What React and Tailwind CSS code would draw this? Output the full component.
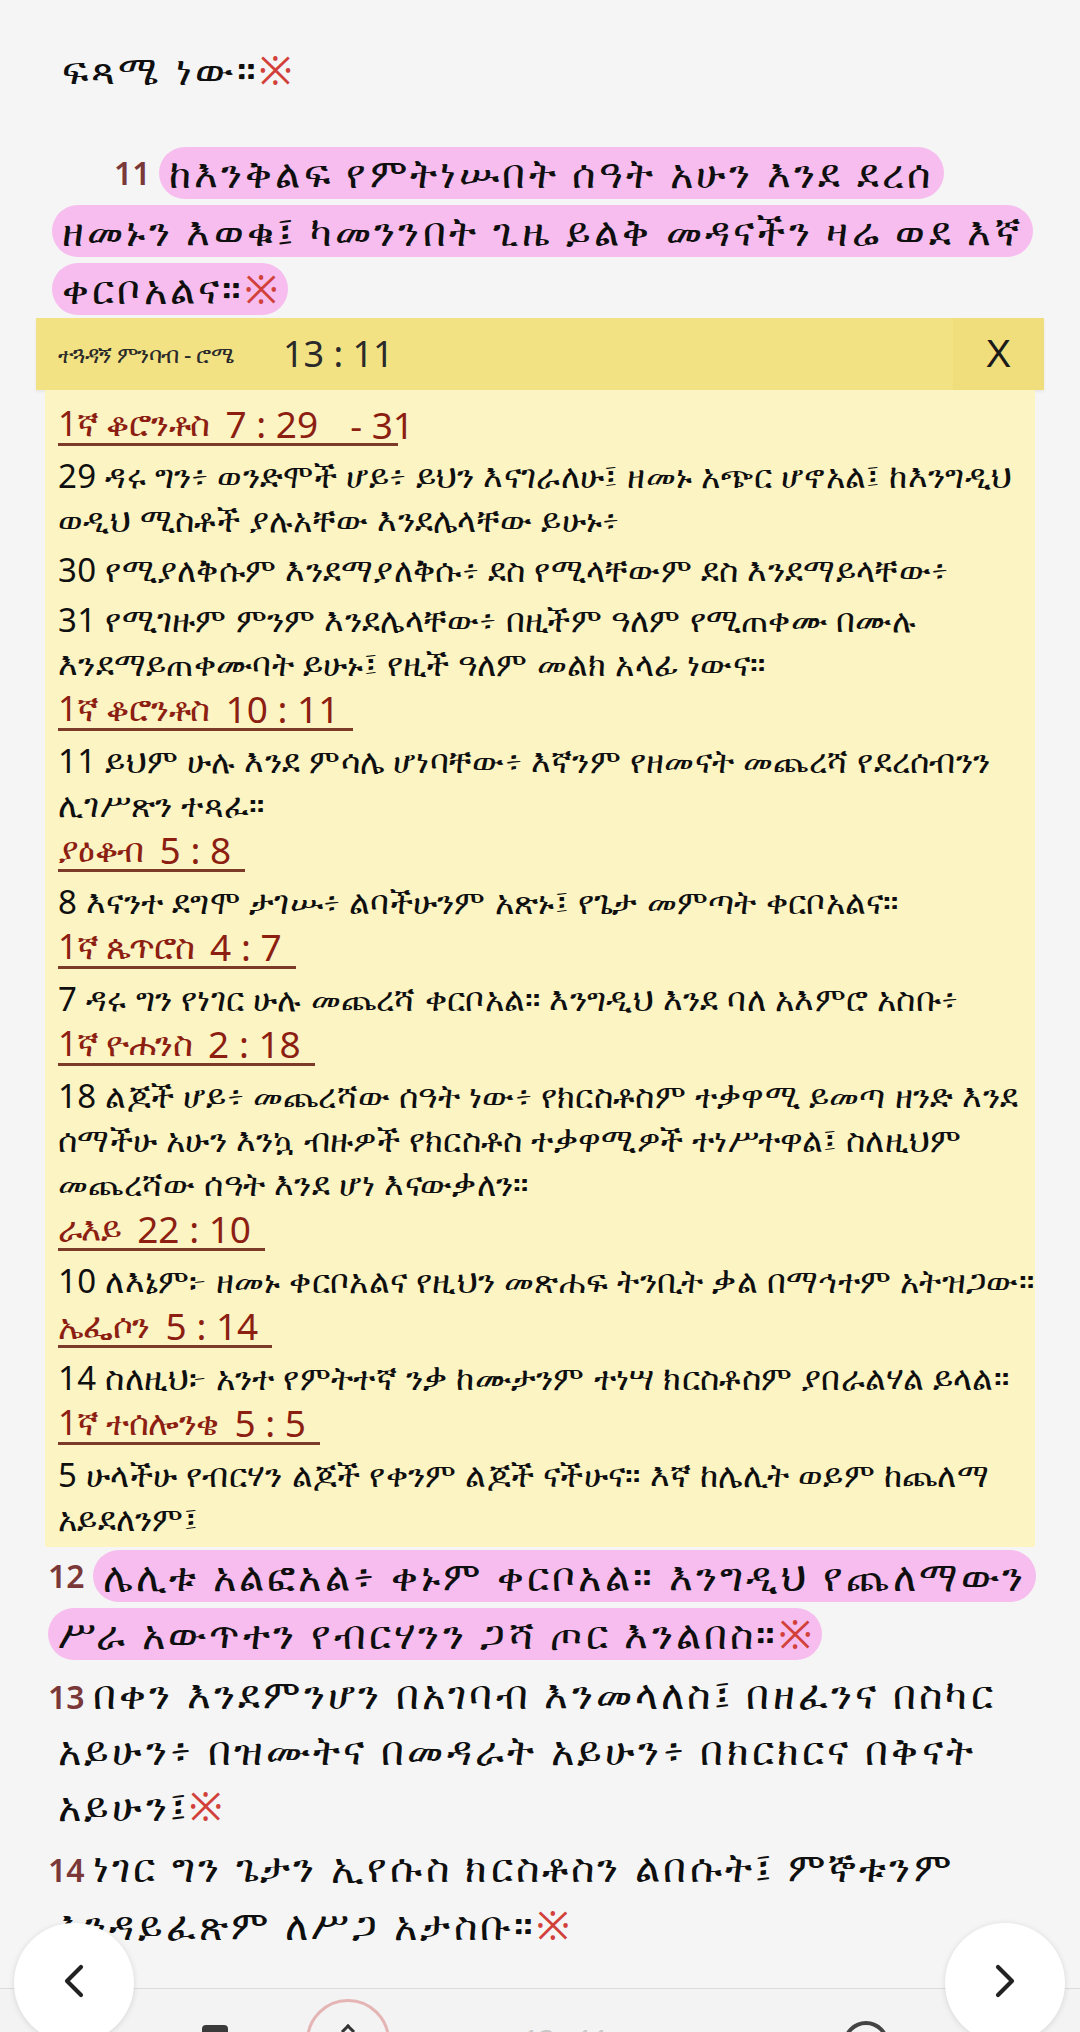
import React from 'react';
import { ChevronLeft, ChevronRight } from 'lucide-react';

const refs = [
  {
    book: '1ኛ ቆሮንቶስ',
    at: '7 : 29',
    tail: '- 31',
    verses: [
      ['29 ዳሩ ግን፥ ወንድሞች ሆይ፥ ይህን እናገራለሁ፤ ዘመኑ አጭር ሆኖአል፤ ከእንግዲህ', 'ወዲህ ሚስቶች ያሉአቸው እንደሌላቸው ይሁኑ፥'],
      ['30 የሚያለቅሱም እንደማያለቅሱ፥ ደስ የሚላቸውም ደስ እንደማይላቸው፥'],
      ['31 የሚገዙም ምንም እንደሌላቸው፥ በዚችም ዓለም የሚጠቀሙ በሙሉ', 'እንደማይጠቀሙባት ይሁኑ፤ የዚች ዓለም መልክ አላፊ ነውና።'],
    ],
  },
  {
    book: '1ኛ ቆሮንቶስ',
    at: '10 : 11',
    verses: [['11 ይህም ሁሉ እንደ ምሳሌ ሆነባቸው፥ እኛንም የዘመናት መጨረሻ የደረሰብንን', 'ሊገሥጽን ተጻፈ።']],
  },
  {
    book: 'ያዕቆብ',
    at: '5 : 8',
    verses: [['8 እናንተ ደግሞ ታገሡ፥ ልባችሁንም አጽኑ፤ የጌታ መምጣት ቀርቦአልና።']],
  },
  {
    book: '1ኛ ጴጥሮስ',
    at: '4 : 7',
    verses: [['7 ዳሩ ግን የነገር ሁሉ መጨረሻ ቀርቦአል። እንግዲህ እንደ ባለ አእምሮ አስቡ፥']],
  },
  {
    book: '1ኛ ዮሐንስ',
    at: '2 : 18',
    verses: [
      [
        '18 ልጆች ሆይ፥ መጨረሻው ሰዓት ነው፥ የክርስቶስም ተቃዋሚ ይመጣ ዘንድ እንደ',
        'ሰማችሁ አሁን እንኳ ብዙዎች የክርስቶስ ተቃዋሚዎች ተነሥተዋል፤ ስለዚህም',
        'መጨረሻው ሰዓት እንደ ሆነ እናውቃለን።',
      ],
    ],
  },
  {
    book: 'ራእይ',
    at: '22 : 10',
    verses: [['10 ለእኔም፦ ዘመኑ ቀርቦአልና የዚህን መጽሐፍ ትንቢት ቃል በማኅተም አትዝጋው።']],
  },
  {
    book: 'ኤፌሶን',
    at: '5 : 14',
    verses: [['14 ስለዚህ፦ አንተ የምትተኛ ንቃ ከሙታንም ተነሣ ክርስቶስም ያበራልሃል ይላል።']],
  },
  {
    book: '1ኛ ተሰሎንቄ',
    at: '5 : 5',
    verses: [['5 ሁላችሁ የብርሃን ልጆች የቀንም ልጆች ናችሁና። እኛ ከሌሊት ወይም ከጨለማ', 'አይደለንም፤']],
  },
];

const Star = () => <span className="text-[#d2403a] tracking-normal font-normal">※</span>;

const Pill = ({ children }) => (
  <span className="inline-block h-[52px] leading-[52px] rounded-full bg-[#f6bdee] px-[10px]">{children}</span>
);

const Num = ({ n }) => (
  <span className="text-[#7a3838] text-[32px] font-semibold tracking-normal mr-[8px]">{n}</span>
);

export default function App() {
  return (
    <div className="relative h-[2032px] overflow-hidden bg-[#f5f5f5] text-[#0f0f0f] font-['Noto_Sans','DejaVu_Sans',sans-serif]">
      {/* reading text */}
      <div className="pt-[41px] px-[52px] text-[40px] font-medium tracking-[3.2px] leading-[58px] whitespace-nowrap">
        <div className="pl-[10px]">
          ፍጻሜ ነው።<Star />
        </div>

        <div className="mt-[45px]">
          <div className="flex items-center h-[58px] pl-[62px]">
            <Num n="11" />
            <Pill>ከእንቅልፍ የምትነሡበት ሰዓት አሁን እንደ ደረሰ</Pill>
          </div>
          <div className="flex items-center h-[58px]">
            <Pill>ዘመኑን እወቁ፤ ካመንንበት ጊዜ ይልቅ መዳናችን ዛሬ ወደ እኛ</Pill>
          </div>
          <div className="flex items-center h-[58px]">
            <Pill>
              ቀርቦአልና።<Star />
            </Pill>
          </div>
        </div>
      </div>

      {/* cross reference panel */}
      <div className="mx-[36px]">
        <div className="flex items-center h-[72px] bg-[#f3e283] shadow-[0_2px_3px_rgba(0,0,0,0.06)]">
          <div className="flex-1 pl-[22px] flex items-center text-[#2a2a2a]">
            <span className="text-[23px] tracking-[-0.6px]">ተጓዳኝ ምንባብ - ሮሜ</span>
            <span className="ml-[50px] text-[36px] whitespace-pre">13 : 11</span>
          </div>
          <div className="w-[91px] h-full flex items-center justify-center bg-[#f0dd7c] text-[38px] text-[#1a1a1a] font-['Liberation_Sans',sans-serif]">
            X
          </div>
        </div>

        <div className="mx-[9px] bg-[#fcf4c3] pl-[13px] pt-[17px] pb-[6px] whitespace-nowrap">
          {refs.map((r, i) => (
            <div key={i} className={i > 0 ? 'mt-[6px]' : ''}>
              <div className="h-[39px] flex items-end text-[#8c1e12]">
                <span
                  className={`inline-flex items-center h-[39px] pb-[3px] border-b-[3px] border-[#7c3b28] ${
                    r.tail ? 'pr-[80px]' : 'pr-[14px]'
                  }`}
                >
                  <span className="text-[34px] tracking-[-0.6px]">{r.book}</span>
                  <span className="ml-[16px] text-[37px] whitespace-pre">{r.at}</span>
                </span>
                {r.tail && (
                  <span className="-ml-[48px] h-[39px] flex items-center pb-[3px] text-[37px]">{r.tail}</span>
                )}
              </div>
              <div className="mt-[8px]">
                {r.verses.map((v, j) => (
                  <div key={j} className={j > 0 ? 'mt-[6px]' : ''}>
                    {v.map((line, k) => (
                      <div key={k} className="h-[44px] leading-[44px] text-[33px] tracking-[0.3px]">
                        {line}
                      </div>
                    ))}
                  </div>
                ))}
              </div>
            </div>
          ))}
        </div>
      </div>

      <div className="px-[48px] text-[40px] font-medium tracking-[3.2px] leading-[58px] whitespace-nowrap">
        <div className="flex items-center h-[58px]">
          <Num n="12" />
          <Pill>ሌሊቱ አልፎአል፥ ቀኑም ቀርቦአል። እንግዲህ የጨለማውን</Pill>
        </div>
        <div className="flex items-center h-[58px]">
          <Pill>
            ሥራ አውጥተን የብርሃንን ጋሻ ጦር እንልበስ።<Star />
          </Pill>
        </div>

        <div className="mt-[3px]">
          <div className="h-[56px] leading-[56px]">
            <Num n="13" />
            በቀን እንደምንሆን በአገባብ እንመላለስ፤ በዘፈንና በስካር
          </div>
          <div className="h-[56px] leading-[56px] pl-[10px]">አይሁን፥ በዝሙትና በመዳራት አይሁን፥ በክርክርና በቅናት</div>
          <div className="h-[56px] leading-[56px] pl-[10px]">
            አይሁን፤<Star />
          </div>
        </div>

        <div className="mt-[4px]">
          <div className="h-[58px]">
            <Num n="14" />
            ነገር ግን ጌታን ኢየሱስ ክርስቶስን ልበሱት፤ ምኞቱንም
          </div>
          <div className="h-[58px] pl-[10px]">
            እንዳይፈጽም ለሥጋ አታስቡ።<Star />
          </div>
        </div>
      </div>

      {/* bottom bar */}
      <div className="absolute left-0 right-0 top-[1988px] h-[100px] border-t border-[#dcdcdc] bg-[#f3f3f3]">
        <div className="flex items-start h-full">
          <div className="ml-[202px] mt-[36px] w-[26px] h-[26px] bg-[#3a3a3a] rounded-t-[4px]" />
          <div className="ml-[78px] mt-[10px] w-[84px] h-[84px] rounded-full border-[3px] border-[#e5b5b5] flex justify-center">
            <div className="mt-[24px] w-[10px] h-[10px] border-t-[3px] border-l-[3px] border-[#333] rotate-45" />
          </div>
          <div className="ml-[133px] mt-[34px] w-[117px] text-[28px] leading-[32px] text-[#c8c8c8]">13 : 11</div>
          <div className="ml-[203px] mt-[32px] w-[46px] h-[46px] rounded-full border-[4px] border-[#444]" />
        </div>
      </div>

      {/* floating arrows */}
      <div className="absolute left-[14px] top-[1923px] w-[120px] h-[120px] rounded-full bg-white shadow-[0_1px_6px_rgba(0,0,0,0.12)] flex items-center justify-center">
        <ChevronLeft className="w-[56px] h-[56px] text-[#222] -mt-[4px]" strokeWidth={1.8} />
      </div>
      <div className="absolute left-[945px] top-[1923px] w-[120px] h-[120px] rounded-full bg-white shadow-[0_1px_6px_rgba(0,0,0,0.12)] flex items-center justify-center">
        <ChevronRight className="w-[56px] h-[56px] text-[#222] -mt-[4px]" strokeWidth={1.8} />
      </div>
    </div>
  );
}
